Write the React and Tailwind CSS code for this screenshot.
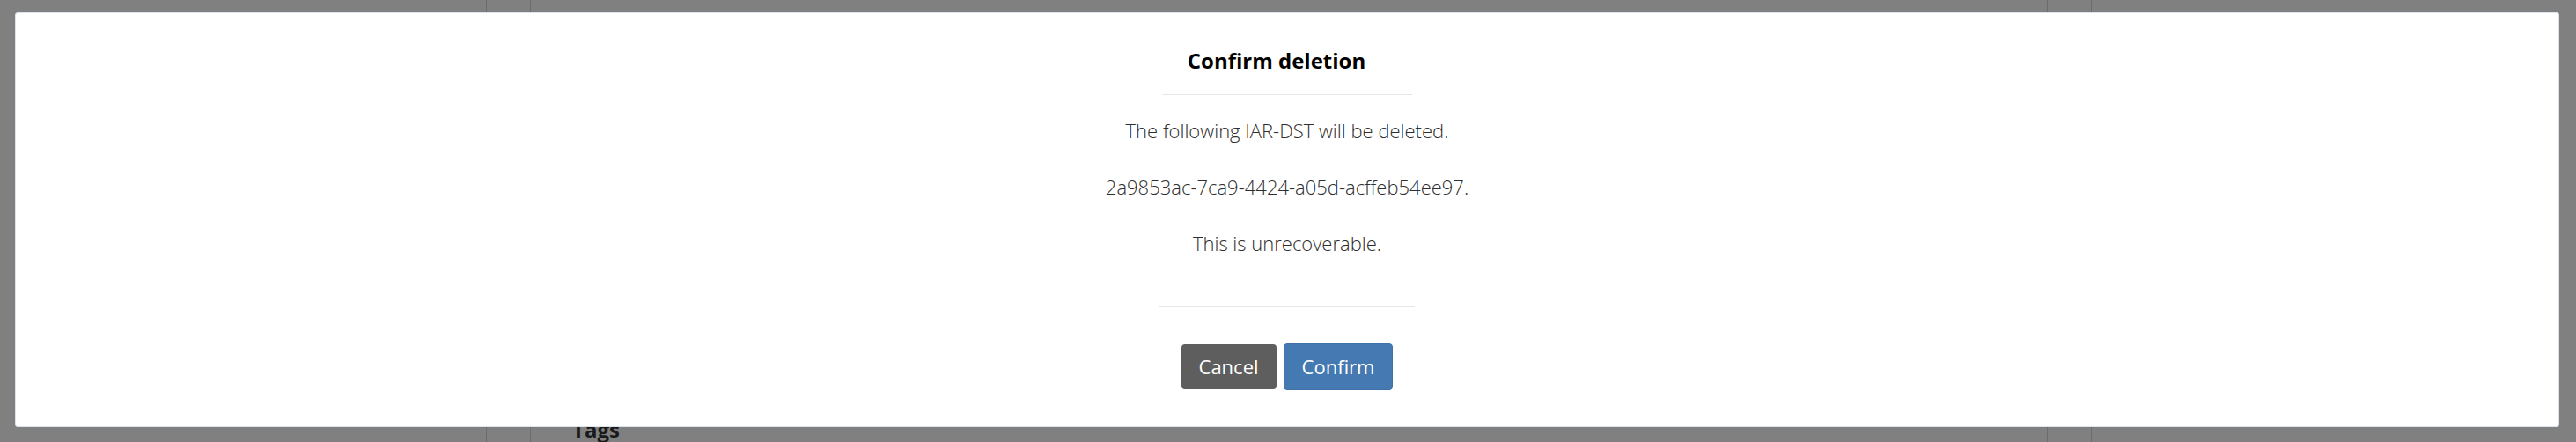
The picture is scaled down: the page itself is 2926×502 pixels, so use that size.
import React from "react";

export default function App() {
  return (
    <div className="relative w-full h-[502px] overflow-hidden bg-[#808080]" style={{ fontFamily: '"Open Sans", "Noto Sans", sans-serif' }}>
      {/* page behind the overlay */}
      <div className="h-full flex">
        <div className="w-[552px] shrink-0" />
        <div className="w-[1824px] shrink-0 h-full border-l border-r border-[#6c6c6c] flex">
          <div className="w-[49px] shrink-0" />
          <div className="flex-1 h-full border-l border-r border-[#6c6c6c] pl-[47px] pt-[473px]">
            <h3 className="text-[24px] leading-[29px] font-bold text-[#1a1a1a]">Tags</h3>
          </div>
          <div className="w-[49px] shrink-0" />
        </div>
      </div>

      {/* modal */}
      <div className="absolute left-[17px] top-[14px] right-[19px] bottom-[17px] bg-white border border-[#dde4ec] rounded-[3px] flex flex-col items-center pt-[37px]">
        <h4 className="text-[24px] leading-[33px] font-bold text-black mr-[24px]">Confirm deletion</h4>
        <div className="w-[284px] h-px bg-[#e6e6e6] mt-[22px]" />
        <div className="flex flex-col items-center text-[22px] leading-[30px] font-light text-[#2e2e2e] mt-[25px] gap-[34px]">
          <p>The following IAR-DST will be deleted.</p>
          <p>2a9853ac-7ca9-4424-a05d-acffeb54ee97.</p>
          <p>This is unrecoverable.</p>
        </div>
        <div className="w-[290px] h-px bg-[#e6e6e6] mt-[57px]" />
        <div className="flex items-center gap-[8px] mt-[41px]">
          <button className="h-[51px] px-[20px] rounded-[4px] bg-[#5e5e5e] text-white text-[22px] leading-[51px]">Cancel</button>
          <button className="h-[53px] px-[20px] rounded-[4px] bg-[#4479b1] border border-[#3f72a8] text-white text-[22px] leading-[51px]">Confirm</button>
        </div>
      </div>
    </div>
  );
}
